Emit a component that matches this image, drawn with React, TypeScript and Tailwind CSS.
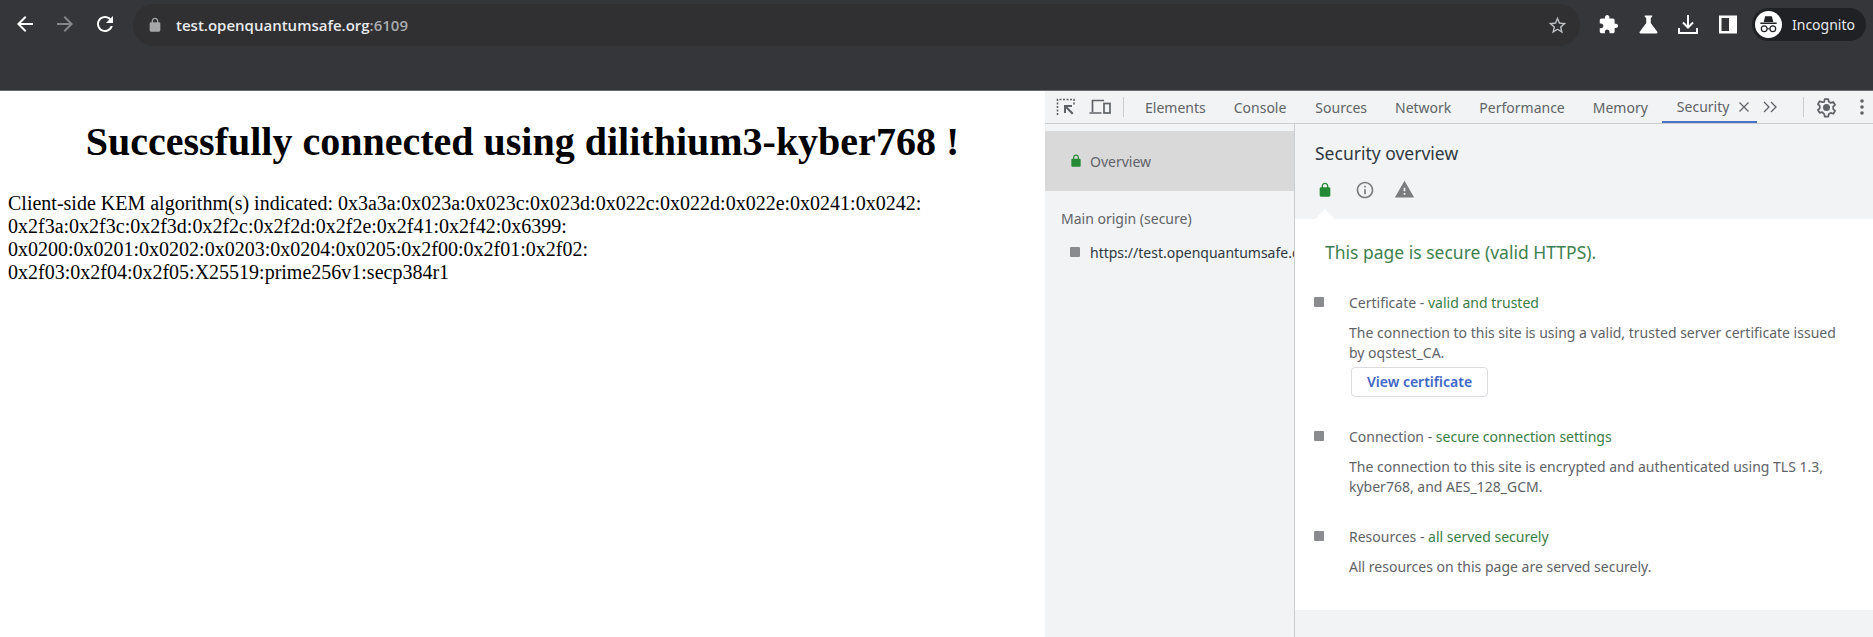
import { ReactNode } from "react";

function Icon({ d, className }: { d: string; className: string }) {
  return (
    <svg viewBox="0 0 24 24" fill="currentColor" className={className}>
      <path d={d} />
    </svg>
  );
}

const LOCK =
  "M18 8h-1V6c0-2.76-2.24-5-5-5S7 3.24 7 6v2H6c-1.1 0-2 .9-2 2v10c0 1.1.9 2 2 2h12c1.1 0 2-.9 2-2V10c0-1.1-.9-2-2-2zM9 6c0-1.66 1.34-3 3-3s3 1.34 3 3v2H9V6z";

function BrowserBar() {
  return (
    <header className="h-[91px] shrink-0 bg-[#35363a] border-b border-[#6b6c70]">
      <div className="flex items-start h-[48px] pt-[4px] text-white">
        <div className="w-[133px] shrink-0 flex items-center h-[40px] pl-[13px] gap-[16px]">
          <Icon className="w-[24px] h-[24px]" d="M20 11H7.83l5.59-5.59L12 4l-8 8 8 8 1.41-1.41L7.83 13H20v-2z" />
          <Icon className="w-[24px] h-[24px] text-[#85868a]" d="M12 4l-1.41 1.41L16.17 11H4v2h12.17l-5.58 5.59L12 20l8-8z" />
          <Icon className="w-[24px] h-[24px]" d="M17.65 6.35C16.2 4.9 14.21 4 12 4c-4.42 0-7.99 3.58-7.99 8s3.57 8 7.99 8c3.73 0 6.84-2.55 7.73-6h-2.08c-.82 2.33-3.04 4-5.65 4-3.31 0-6-2.69-6-6s2.69-6 6-6c1.66 0 3.14.69 4.22 1.78L13 11h7V4l-2.35 2.35z" />
        </div>
        <div className="w-[1447px] shrink-0 h-[42px] rounded-full bg-[#303032] flex items-center pl-[14px] pr-[12px]">
          <Icon className="w-[16px] h-[16px] text-[#a5a6a8] mr-[13px]" d={LOCK} />
          <span className="text-[15px] font-semibold text-[#e8eaed] font-['Open_Sans',sans-serif]">
            test.openquantumsafe.org<span className="text-[#a9abae]">:6109</span>
          </span>
          <Icon className="w-[21px] h-[21px] ml-auto text-[#bdc1c6]" d="M22 9.24l-7.19-.62L12 2 9.19 8.63 2 9.24l5.46 4.73L5.82 21 12 17.27 18.18 21l-1.63-7.03L22 9.24zM12 15.4l-3.76 2.27 1-4.28-3.32-2.88 4.38-.38L12 6.1l1.71 4.04 4.38.38-3.32 2.88 1 4.28L12 15.4z" />
        </div>
        <div className="flex items-center h-[40px] pl-[16px] gap-[16px]">
          <Icon className="w-[21px] h-[21px] mx-[1.5px]" d="M20.5 11H19V7c0-1.1-.9-2-2-2h-4V3.5C13 2.12 11.88 1 10.5 1S8 2.12 8 3.5V5H4c-1.1 0-1.99.9-1.99 2v3.8H3.5c1.49 0 2.7 1.21 2.7 2.7s-1.21 2.7-2.7 2.7H2V20c0 1.1.9 2 2 2h3.8v-1.5c0-1.49 1.21-2.7 2.7-2.7 1.49 0 2.7 1.21 2.7 2.7V22H17c1.1 0 2-.9 2-2v-4h1.5c1.38 0 2.5-1.12 2.5-2.5S21.88 11 20.5 11z" />
          <Icon className="w-[27px] h-[27px] mx-[-1.5px]" d="M19.8 18.4L14 10.67V6.5l1.35-1.69c.26-.33.03-.81-.39-.81H9.04c-.42 0-.65.48-.39.81L10 6.5v4.17L4.2 18.4c-.49.66-.02 1.6.8 1.6h14c.82 0 1.29-.94.8-1.6z" />
          <svg viewBox="0 0 24 24" className="w-[24px] h-[24px]" fill="none" stroke="currentColor" strokeWidth="2">
            <path d="M12 3v12M7 10.5l5 5 5-5M3 16v5h18v-5" />
          </svg>
          <svg viewBox="0 0 24 24" className="w-[24px] h-[24px]">
            <path fill="white" fillRule="evenodd" d="M3 3.500h18v18H3zM5.500 6v13H13V6z" />
          </svg>
          <div className="ml-[-4px] h-[33px] w-[114px] rounded-full bg-[#202124] flex items-center pl-[3px]">
            <div className="w-[27px] h-[27px] rounded-full bg-white flex items-center justify-center">
              <svg viewBox="0 0 24 24" className="w-[23px] h-[23px] text-[#202124]" fill="currentColor">
                <path d="M8.500 3.500h7l1.500 6H7zM3.500 10h17v1.500h-17z" />
                <circle cx="7.500" cy="16.500" r="3" fill="none" stroke="currentColor" strokeWidth="1.300" />
                <circle cx="16.500" cy="16.500" r="3" fill="none" stroke="currentColor" strokeWidth="1.300" />
                <path d="M10.500 16h3v1h-3z" />
              </svg>
            </div>
            <span className="ml-[10px] text-[14px] text-[#e8eaed] font-['Noto_Sans',sans-serif]">Incognito</span>
          </div>
        </div>
      </div>
    </header>
  );
}

function PageContent() {
  return (
    <main className="w-[1045px] shrink-0 bg-white text-black font-['Liberation_Serif',serif]">
      <h1 className="mt-[28px] text-center text-[40px] leading-[46px] font-bold">
        Successfully connected using dilithium3-kyber768 !
      </h1>
      <p className="mt-[27px] pl-[8px] text-[20px] leading-[23px]">
        Client-side KEM algorithm(s) indicated: 0x3a3a:0x023a:0x023c:0x023d:0x022c:0x022d:0x022e:0x0241:0x0242:
        <br />
        0x2f3a:0x2f3c:0x2f3d:0x2f2c:0x2f2d:0x2f2e:0x2f41:0x2f42:0x6399:
        <br />
        0x0200:0x0201:0x0202:0x0203:0x0204:0x0205:0x2f00:0x2f01:0x2f02:
        <br />
        0x2f03:0x2f04:0x2f05:X25519:prime256v1:secp384r1
      </p>
    </main>
  );
}

function Toolbar() {
  return (
    <div className="h-[33px] shrink-0 flex items-center bg-[#f1f3f4] border-b border-[#cacdd1] text-[14px] text-[#5f6368]">
      <svg viewBox="0 0 20 20" className="ml-[11px] w-[20px] h-[20px]" fill="none" stroke="#5f6368">
        <path d="M1.500 18V2.500H18V8" strokeWidth="1.600" strokeDasharray="2 1.500" />
        <path d="M8 8h8v2h-4.500l6 6-1.500 1.500-6-6V16H8z" fill="#5f6368" stroke="none" />
      </svg>
      <svg viewBox="0 0 22 20" className="ml-[13px] w-[22px] h-[20px]" fill="none" stroke="#5f6368" strokeWidth="1.700">
        <path d="M3.500 15V3.500H15M0.500 16h12" />
        <rect x="15" y="6.500" width="6" height="9.500" />
      </svg>
      <div className="ml-[12px] w-px h-[20px] bg-[#c8cbcf]" />
      <span className="ml-[21px]">Elements</span>
      <span className="ml-[28px]">Console</span>
      <span className="ml-[29px]">Sources</span>
      <span className="ml-[28px]">Network</span>
      <span className="ml-[28px]">Performance</span>
      <span className="ml-[28px]">Memory</span>
      <div className="ml-[14px] h-full w-[95px] flex items-center pl-[15px] border-b-2 border-[#4a72c4] pt-[1px]">
        <span>Security</span>
        <svg viewBox="0 0 12 12" className="ml-[9px] w-[12px] h-[12px]" stroke="#5f6368" strokeWidth="1.200">
          <path d="M1.500 1.500l9 9M10.500 1.500l-9 9" />
        </svg>
      </div>
      <svg viewBox="0 0 16 12" className="ml-[5px] w-[16px] h-[12px]" fill="none" stroke="#5f6368" strokeWidth="1.300">
        <path d="M2 1l5 5-5 5M9 1l5 5-5 5" />
      </svg>
      <div className="ml-[25px] w-px h-[20px] bg-[#c8cbcf]" />
      <svg viewBox="0 0 24 24" className="ml-[12px] w-[21px] h-[21px]" fill="none" stroke="#5f6368" strokeWidth="2">
        <circle cx="12" cy="12" r="3" fill="#5f6368" />
        <path d="M10 2.500h4l.6 3 2.400 1.200 2.800-1 2 3.400-2.200 2 .1 2.800 2.100 1.900-2 3.400-2.800-1-2.400 1.300-.6 3h-4l-.6-3L7 17.200l-2.800 1-2-3.400 2.100-1.900V10.200l-2.100-2 2-3.400 2.800 1L9.400 5.500z" strokeLinejoin="round" />
      </svg>
      <svg viewBox="0 0 4 16" className="ml-[23px] w-[4px] h-[16px]" fill="#5f6368">
        <circle cx="2" cy="2" r="1.800" />
        <circle cx="2" cy="8" r="1.800" />
        <circle cx="2" cy="14" r="1.800" />
      </svg>
    </div>
  );
}

function Sidebar() {
  return (
    <aside className="w-[249px] shrink-0 bg-[#f1f3f4] text-[#5f6368] text-[14px] pt-[7px] overflow-hidden">
      <div className="h-[60px] bg-[#d9d9d9] flex items-center pl-[24px]">
        <Icon className="w-[14px] h-[14px] text-[#258a34] mr-[7px]" d={LOCK} />
        <span>Overview</span>
      </div>
      <div className="pl-[16px] mt-[18px] h-[20px] leading-[20px]">Main origin (secure)</div>
      <div className="flex items-center pl-[25px] mt-[13px] h-[20px] whitespace-nowrap text-[#303942]">
        <span className="w-[10px] h-[10px] rounded-[1px] bg-[#8a8b8e] shrink-0 mr-[10px]" />
        <span>https://test.openquantumsafe.org:6109</span>
      </div>
    </aside>
  );
}

function Section({ title, status, children, className }: { title: string; status: string; children: ReactNode; className: string }) {
  return (
    <section className={`flex ${className}`}>
      <span className="mt-[4px] w-[10px] h-[10px] rounded-[1px] bg-[#8a8b8e] shrink-0 mr-[25px]" />
      <div>
        <div className="h-[20px] leading-[20px] text-[#5f6368]">
          {title} - <span className="text-[#3a7d44]">{status}</span>
        </div>
        <div className="mt-[10px] leading-[20px] text-[#5f6368]">{children}</div>
      </div>
    </section>
  );
}

function Overview() {
  return (
    <div className="flex-1 border-l border-[#cacdd1] bg-[#f1f3f4] flex flex-col min-w-0">
      <div className="h-[95px] shrink-0 pl-[20px] pt-[19px] relative">
        <div className="text-[17.5px] leading-[20px] text-[#303942]">Security overview</div>
        <div className="flex items-center mt-[16px] ml-[1px] gap-[19px] text-[#5f6368]">
          <Icon className="w-[16px] h-[16px] text-[#258a34] ml-[1px] mr-[3px]" d={LOCK} />
          <Icon className="w-[20px] h-[20px] text-[#7b7c7f]" d="M11 7h2v2h-2zm0 4h2v6h-2zm1-9C6.480 2 2 6.480 2 12s4.480 10 10 10 10-4.480 10-10S17.520 2 12 2zm0 18c-4.410 0-8-3.590-8-8s3.590-8 8-8 8 3.590 8 8-3.590 8-8 8z" />
          <Icon className="w-[21px] h-[21px] text-[#7b7c7f]" d="M1 21h22L12 2 1 21zm12-3h-2v-2h2v2zm0-4h-2v-4h2v4z" />
        </div>
        <span className="absolute left-[23px] bottom-[-7px] w-[14px] h-[14px] bg-white rotate-45" />
      </div>
      <div className="h-[391px] shrink-0 bg-white pl-[19px] pt-[23px] text-[14px]">
        <div className="pl-[11px] text-[17.5px] leading-[20px] text-[#3f7f50]">This page is secure (valid HTTPS).</div>
        <Section title="Certificate" status="valid and trusted" className="mt-[31px]">
          <div className="w-[495px]">
            The connection to this site is using a valid, trusted server certificate issued by oqstest_CA.
          </div>
          <button className="mt-[4px] ml-[2px] w-[137px] h-[30px] block rounded-[4px] border border-[#dadce0] bg-white text-[#3f67c4] font-semibold">
            View certificate
          </button>
        </Section>
        <Section title="Connection" status="secure connection settings" className="mt-[30px]">
          <div className="w-[495px]">
            The connection to this site is encrypted and authenticated using TLS 1.3, kyber768, and AES_128_GCM.
          </div>
        </Section>
        <Section title="Resources" status="all served securely" className="mt-[30px]">
          All resources on this page are served securely.
        </Section>
      </div>
    </div>
  );
}

export default function App() {
  return (
    <div className="w-[1873px] h-[637px] flex flex-col overflow-hidden bg-white">
      <BrowserBar />
      <div className="flex flex-1 min-h-0">
        <PageContent />
        <div className="flex-1 min-w-0 flex flex-col font-['Noto_Sans',sans-serif]">
          <Toolbar />
          <div className="flex flex-1 min-h-0 bg-[#f1f3f4]">
            <Sidebar />
            <Overview />
          </div>
        </div>
      </div>
    </div>
  );
}
